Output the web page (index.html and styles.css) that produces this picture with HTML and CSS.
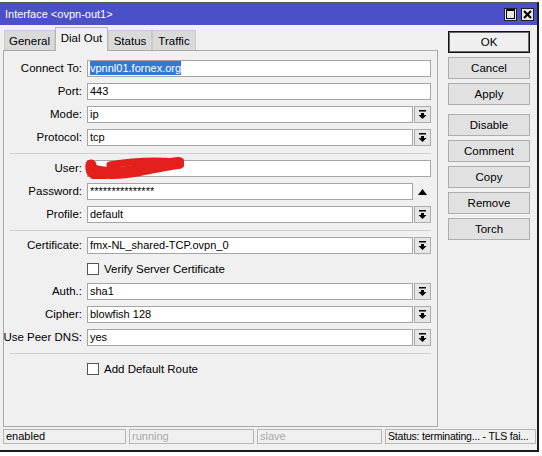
FILE: index.html
```html
<!DOCTYPE html>
<html>
<head>
  <link rel="stylesheet" href="styles.css">
</head>
<body>
  <div class="window">
    <div class="titlebar">
      <span>Interface &lt;ovpn-out1&gt;</span>
      <div class="title-btns">
        <span class="tbtn"><span class="max-box"></span></span>
        <span class="tbtn">
          <svg width="9" height="9" viewBox="0 0 9 9"><path d="M1 1L8 8M8 1L1 8" stroke="#000" stroke-width="2"/></svg>
        </span>
      </div>
    </div>

    <div class="content">
      <div class="main">
        <div class="tabs">
          <div class="tab tab-general">General</div>
          <div class="tab tab-dial active">Dial Out</div>
          <div class="tab tab-status">Status</div>
          <div class="tab tab-traffic">Traffic</div>
        </div>

        <div class="panel">
          <div class="form">
            <div class="lbl">Connect To:</div>
            <div class="field"><div class="input"><span class="sel">vpnnl01.fornex.org</span></div></div>

            <div class="lbl">Port:</div>
            <div class="field"><div class="input">443</div></div>

            <div class="lbl">Mode:</div>
            <div class="field"><div class="input">ip</div><div class="drop"><svg width="9" height="9" viewBox="0 0 9 9"><rect x="1" y="0" width="7" height="1.5"/><path d="M3 3h3v2h2.5L4.5 9 0.5 5H3z"/></svg></div></div>

            <div class="lbl">Protocol:</div>
            <div class="field"><div class="input">tcp</div><div class="drop"><svg width="9" height="9" viewBox="0 0 9 9"><rect x="1" y="0" width="7" height="1.5"/><path d="M3 3h3v2h2.5L4.5 9 0.5 5H3z"/></svg></div></div>

            <div class="sep"></div>

            <div class="lbl">User:</div>
            <div class="field user-field">
              <div class="input"><span class="hidden-user">&nbsp;</span></div>
              <svg class="scribble" width="100" height="22" viewBox="0 0 100 22">
                <path d="M8 13C22 18 40 16 56 13C70 10 84 7 95 6" stroke="#e3201b" stroke-width="12" fill="none" stroke-linecap="round"/>
                <path d="M7 8C6 15 10 19 18 18" stroke="#e3201b" stroke-width="11" fill="none" stroke-linecap="round"/>
                <path d="M26 8C48 4 70 3 92 5" stroke="#e3201b" stroke-width="7" fill="none" stroke-linecap="round"/>
              </svg>
            </div>

            <div class="lbl">Password:</div>
            <div class="field"><div class="input">***************</div><div class="toggle"><svg width="9" height="6" viewBox="0 0 9 6"><path d="M0 6L4.5 0 9 6z"/></svg></div></div>

            <div class="lbl">Profile:</div>
            <div class="field"><div class="input">default</div><div class="drop"><svg width="9" height="9" viewBox="0 0 9 9"><rect x="1" y="0" width="7" height="1.5"/><path d="M3 3h3v2h2.5L4.5 9 0.5 5H3z"/></svg></div></div>

            <div class="sep"></div>

            <div class="lbl">Certificate:</div>
            <div class="field"><div class="input">fmx-NL_shared-TCP.ovpn_0</div><div class="drop"><svg width="9" height="9" viewBox="0 0 9 9"><rect x="1" y="0" width="7" height="1.5"/><path d="M3 3h3v2h2.5L4.5 9 0.5 5H3z"/></svg></div></div>

            <div class="check-row"><span class="cb"></span>Verify Server Certificate</div>

            <div class="lbl">Auth.:</div>
            <div class="field"><div class="input">sha1</div><div class="drop"><svg width="9" height="9" viewBox="0 0 9 9"><rect x="1" y="0" width="7" height="1.5"/><path d="M3 3h3v2h2.5L4.5 9 0.5 5H3z"/></svg></div></div>

            <div class="lbl">Cipher:</div>
            <div class="field"><div class="input">blowfish 128</div><div class="drop"><svg width="9" height="9" viewBox="0 0 9 9"><rect x="1" y="0" width="7" height="1.5"/><path d="M3 3h3v2h2.5L4.5 9 0.5 5H3z"/></svg></div></div>

            <div class="lbl">Use Peer DNS:</div>
            <div class="field"><div class="input">yes</div><div class="drop"><svg width="9" height="9" viewBox="0 0 9 9"><rect x="1" y="0" width="7" height="1.5"/><path d="M3 3h3v2h2.5L4.5 9 0.5 5H3z"/></svg></div></div>

            <div class="sep"></div>

            <div class="check-row"><span class="cb"></span>Add Default Route</div>
          </div>
        </div>
      </div>

      <div class="buttons">
        <div class="btn default">OK</div>
        <div class="btn">Cancel</div>
        <div class="btn">Apply</div>
        <div class="btn spaced">Disable</div>
        <div class="btn">Comment</div>
        <div class="btn">Copy</div>
        <div class="btn">Remove</div>
        <div class="btn">Torch</div>
      </div>
    </div>

    <div class="statusbar">
      <div class="sbox s-enabled">enabled</div>
      <div class="sbox s-running dim">running</div>
      <div class="sbox s-slave dim">slave</div>
      <div class="sbox s-status">Status: terminating... - TLS fai...</div>
    </div>
  </div>
</body>
</html>
```

FILE: styles.css
```css
body {
  margin: 0;
  width: 542px;
  height: 456px;
  overflow: hidden;
  background: #fff;
  font-family: "Liberation Sans", Arial, sans-serif;
  font-size: 11px;
  color: #000;
}

.window {
  width: 537px;
  margin-top: 2px;
  border-top: 1px solid #555;
  border-right: 2px solid #1a1a1a;
  border-bottom: 2px solid #1a1a1a;
  background: #f0f0f0;
}

.titlebar {
  height: 22px;
  background: #4b4fc8;
  color: #fff;
  display: flex;
  align-items: center;
  justify-content: space-between;
  padding: 0 3px 0 5px;
}

.title-btns {
  display: flex;
  gap: 4px;
}

.tbtn {
  width: 13px;
  height: 13px;
  box-sizing: border-box;
  border: 1px solid #222;
  background: #e8e8e8;
  display: flex;
  align-items: center;
  justify-content: center;
}

.max-box {
  width: 7px;
  height: 7px;
  border: 1px solid #000;
  border-top-width: 2px;
}

.content {
  display: flex;
  height: 402px;
}

.main {
  margin-left: 3px;
  width: 435px;
  padding-top: 2px;
  display: flex;
  flex-direction: column;
}

.tabs {
  display: flex;
  align-items: flex-end;
  height: 23px;
  padding-left: 1px;
}

.tab {
  box-sizing: border-box;
  height: 20px;
  background: #dadada;
  border: 1px solid #c9c9c9;
  border-bottom: none;
  display: flex;
  align-items: center;
  justify-content: center;
  font-size: 11.5px;
}

.tab-general { width: 51px; }
.tab-dial { width: 53px; }
.tab-status { width: 44px; }
.tab-traffic { width: 44px; }

.tab.active {
  height: 24px;
  margin-bottom: -1px;
  background: #f0f0f0;
  border-color: #b8b8b8;
  align-items: flex-start;
  padding-top: 4px;
  position: relative;
  z-index: 1;
}

.panel {
  flex: 1;
  border: 1px solid #a9a9a9;
  background: #f0f0f0;
  padding: 9px 6px 0 6px;
}

.form {
  display: grid;
  grid-template-columns: 72px 1fr;
  column-gap: 5px;
  row-gap: 6px;
}

.lbl {
  justify-self: end;
  white-space: nowrap;
  height: 17px;
  line-height: 17px;
  font-size: 11.5px;
}

.field {
  display: flex;
  gap: 1px;
  height: 17px;
}

.input {
  flex: 1;
  box-sizing: border-box;
  height: 17px;
  background: #fff;
  border: 1px solid #a5a5a5;
  padding-left: 2px;
  line-height: 15px;
  white-space: nowrap;
  overflow: hidden;
}

.sel {
  background: #3477d4;
  color: #fff;
  display: inline-block;
  line-height: 14px;
}

.drop {
  width: 17px;
  box-sizing: border-box;
  border: 1px solid #adadad;
  background: #e6e6e6;
  display: flex;
  align-items: center;
  justify-content: center;
}

.toggle {
  width: 17px;
  display: flex;
  align-items: center;
  justify-content: center;
}

.user-field {
  position: relative;
}

.scribble {
  position: absolute;
  left: -3px;
  top: -3px;
}

.sep {
  grid-column: 1 / -1;
  height: 1px;
  border-bottom: 1px solid #d0d0d0;
}

.check-row {
  grid-column: 2;
  height: 17px;
  display: flex;
  align-items: center;
  gap: 5px;
  font-size: 11.5px;
}

.cb {
  width: 12px;
  height: 12px;
  box-sizing: border-box;
  border: 1px solid #555;
  background: #fff;
}

.buttons {
  margin-left: 10px;
  width: 82px;
  padding-top: 6px;
  display: flex;
  flex-direction: column;
  gap: 4px;
}

.btn {
  height: 22px;
  box-sizing: border-box;
  border: 1px solid #adadad;
  background: #e1e1e1;
  display: flex;
  align-items: center;
  justify-content: center;
  font-size: 11.5px;
}

.btn.default {
  border: 1px solid #111;
  box-shadow: inset 0 0 0 1px #6a6a6a;
  background: #efefef;
}

.btn.spaced {
  margin-top: 5px;
}

.statusbar {
  display: flex;
  gap: 3px;
  padding: 2px 0 6px 3px;
}

.sbox {
  box-sizing: border-box;
  height: 15px;
  border: 1px solid #b5b5b5;
  padding-left: 2px;
  line-height: 13px;
  white-space: nowrap;
  overflow: hidden;
}

.s-enabled { width: 123px; }
.s-running { width: 125px; }
.s-slave { width: 125px; }
.s-status {
  width: 151px;
  font-size: 10.5px;
  letter-spacing: -0.2px;
}

.dim {
  color: #a8a8a8;
}
```
